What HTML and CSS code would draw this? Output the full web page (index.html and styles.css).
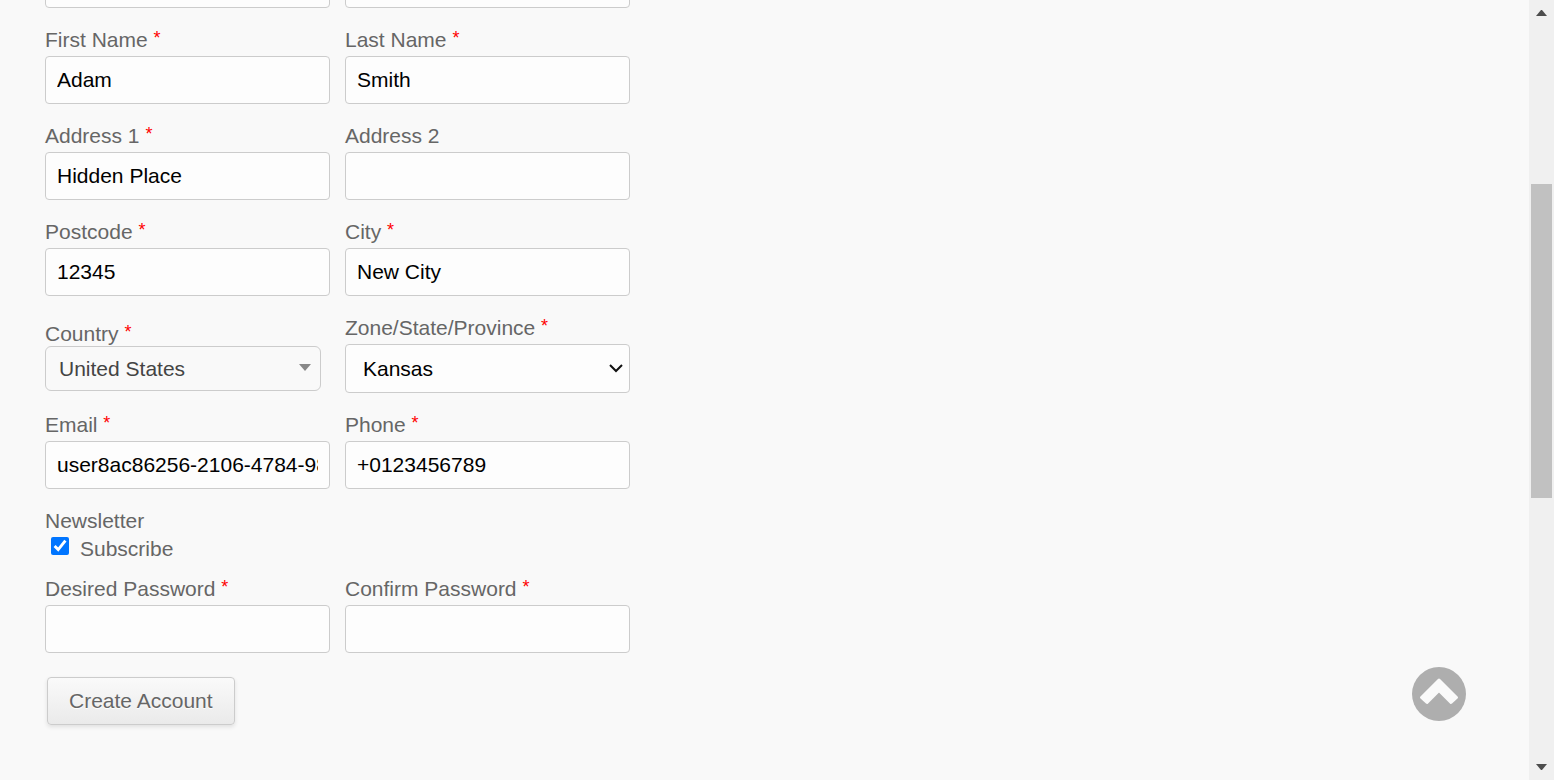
FILE: index.html
```html
<!DOCTYPE html>
<html lang="en">
<head>
<meta charset="utf-8">
<title>Create Account</title>
<link rel="stylesheet" href="styles.css">
</head>
<body class="page">
<main class="content">
  <form class="form">
    <div class="row row-cut">
      <div class="field"><input class="input" type="text" aria-label="Company"></div>
      <div class="field"><input class="input" type="text" aria-label="Tax number"></div>
    </div>
    <div class="row">
      <div class="field"><label class="label" for="first">First Name <span class="req">*</span></label><input class="input" id="first" type="text" value="Adam"></div>
      <div class="field"><label class="label" for="last">Last Name <span class="req">*</span></label><input class="input" id="last" type="text" value="Smith"></div>
    </div>
    <div class="row">
      <div class="field"><label class="label" for="address1">Address 1 <span class="req">*</span></label><input class="input" id="address1" type="text" value="Hidden Place"></div>
      <div class="field"><label class="label" for="address2">Address 2</label><input class="input" id="address2" type="text"></div>
    </div>
    <div class="row">
      <div class="field"><label class="label" for="postcode">Postcode <span class="req">*</span></label><input class="input" id="postcode" type="text" value="12345"></div>
      <div class="field"><label class="label" for="city">City <span class="req">*</span></label><input class="input" id="city" type="text" value="New City"></div>
    </div>
    <div class="row">
      <div class="field field-country">
        <label class="label" for="country">Country <span class="req">*</span></label>
        <div class="select-wrap">
          <select class="select select-country" id="country"><option>United States</option></select>
          <svg class="caret" viewBox="0 0 12 7" aria-hidden="true"><path d="M0 0h12L6 7z"/></svg>
        </div>
      </div>
      <div class="field">
        <label class="label" for="zone">Zone/State/Province <span class="req">*</span></label>
        <div class="select-wrap">
          <select class="select select-zone" id="zone"><option>Kansas</option></select>
          <svg class="chevron" viewBox="0 0 14 9" aria-hidden="true"><path d="M1 1l6 6 6-6"/></svg>
        </div>
      </div>
    </div>
    <div class="row">
      <div class="field"><label class="label" for="email">Email <span class="req">*</span></label><input class="input" id="email" type="email" value="user8ac86256-2106-4784-98"></div>
      <div class="field"><label class="label" for="phone">Phone <span class="req">*</span></label><input class="input" id="phone" type="tel" value="+0123456789"></div>
    </div>
    <div class="field" role="group" aria-labelledby="newsletter">
      <span class="label" id="newsletter">Newsletter</span>
      <label class="subscribe"><input class="checkbox" type="checkbox" checked>Subscribe</label>
    </div>
    <div class="row row-password">
      <div class="field"><label class="label" for="password">Desired Password <span class="req">*</span></label><input class="input" id="password" type="password"></div>
      <div class="field"><label class="label" for="confirm">Confirm Password <span class="req">*</span></label><input class="input" id="confirm" type="password"></div>
    </div>
    <button class="submit" type="button">Create Account</button>
  </form>
</main>
<aside class="scrollbar" aria-hidden="true">
  <svg class="arrow" viewBox="0 0 25 25"><path d="M7 16h11l-5-6h-1z"/></svg>
  <div class="track"><div class="thumb"></div></div>
  <svg class="arrow" viewBox="0 0 25 25"><path d="M7 9h11l-5 6h-1z"/></svg>
</aside>
<a class="to-top" href="#" aria-label="Back to top">
  <svg class="to-top-icon" viewBox="0 0 54 54" aria-hidden="true">
    <circle cx="27" cy="27" r="27" fill="#aeaeae"/>
    <path d="M27 13L44.500 30.500L39 35.500L27 23.500L15 35.500L9.500 30.500Z" fill="#fafafa" stroke="#fafafa" stroke-width="3" stroke-linejoin="round"/>
  </svg>
</a>
</body>
</html>
```
FILE: styles.css
```css
* { box-sizing: border-box; }

.page {
  display: flex;
  height: 100vh;
  margin: 0;
  overflow: hidden;
  background: #f9f9f9;
  color: #666;
  font: 21px/24px "Liberation Sans", Arial, sans-serif;
}

.content {
  flex: 1;
  min-width: 0;
  padding: 0 45px;
  overflow: hidden;
}

.form {
  display: flex;
  flex-direction: column;
  gap: 20px;
  max-width: 585px;
}

.row {
  display: grid;
  grid-template-columns: 1fr 1fr;
  gap: 15px;
}

/* The page is scrolled partway past this row. */
.row-cut { margin-top: -40px; }
.row-password { margin-top: -4px; }

.field {
  display: flex;
  flex-direction: column;
  gap: 4px;
  min-width: 0;
}

.field-country {
  gap: 0;
  padding: 6px 9px 0 0;
}

.req {
  color: #f00;
  font-size: 18px;
  line-height: 1px;
  vertical-align: 3px;
}

.input,
.select {
  width: 100%;
  margin: 0;
  border: 1px solid #ccc;
  border-radius: 4px;
  background: #fdfdfd;
  color: #000;
  font: inherit;
}

.input {
  height: 48px;
  padding: 0 11px;
}

.select-wrap {
  display: grid;
  align-items: center;
}

.select-wrap > * { grid-area: 1 / 1; }

.select { appearance: none; }

.select-zone {
  height: 49px;
  padding: 0 32px 0 17px;
}

.select-country {
  height: 45px;
  padding: 0 32px 0 13px;
  border-radius: 6px;
  background: #f9f9f9;
  color: #444;
}

.caret,
.chevron {
  justify-self: end;
  pointer-events: none;
}

.caret {
  width: 12px;
  height: 7px;
  margin-right: 10px;
  margin-bottom: 2px;
  fill: #888;
}

.chevron {
  width: 14px;
  height: 9px;
  margin-right: 7px;
  fill: none;
  stroke: #111;
  stroke-width: 2;
}

.subscribe {
  display: flex;
  align-items: center;
  gap: 11px;
}

.checkbox {
  width: 18px;
  height: 18px;
  margin: 0 0 6px 6px;
  accent-color: #0075ff;
}

.submit {
  align-self: flex-start;
  height: 48px;
  margin: 4px 0 0 2px;
  padding: 0 21px;
  border: 1px solid #ccc;
  border-radius: 4px;
  background: linear-gradient(#fafafa, #eaeaea);
  box-shadow: 0 2px 4px rgba(0, 0, 0, 0.1);
  color: #666;
  font: inherit;
  text-shadow: 0 1px 1px #fff;
}

.scrollbar {
  display: flex;
  flex-direction: column;
  width: 25px;
  background: #f0f0f0;
}

.arrow {
  width: 25px;
  height: 25px;
  fill: #4d4d4d;
}

.track {
  display: grid;
  flex: 1;
  grid-template-rows: 159fr 314fr 257fr;
  padding: 0 2px;
}

.thumb {
  grid-row: 2;
  background: #c1c1c1;
}

.to-top {
  position: fixed;
  right: 88px;
  bottom: 59px;
}

.to-top-icon {
  display: block;
  width: 54px;
  height: 54px;
}
```
